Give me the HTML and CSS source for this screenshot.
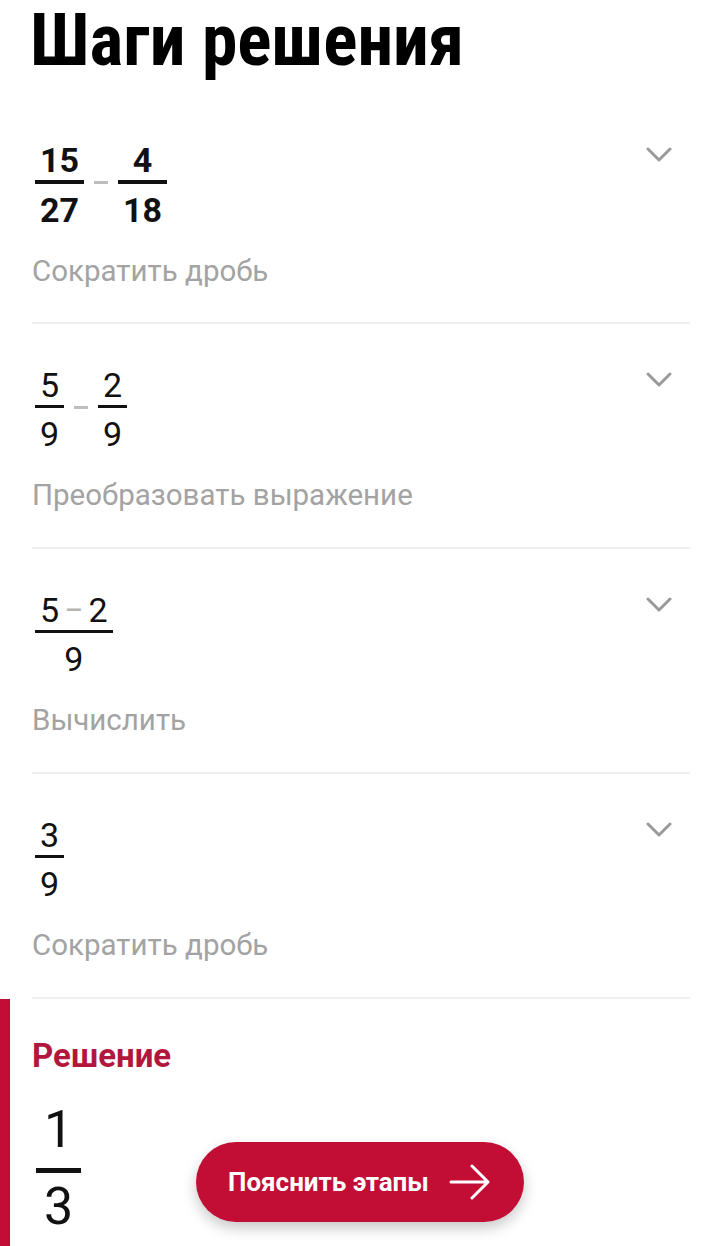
FILE: index.html
```html
<!DOCTYPE html>
<html lang="ru">
<head>
<meta charset="utf-8">
<link rel="stylesheet" href="styles.css">
</head>
<body>
<main class="page">
  <h1 class="title">Шаги решения</h1>

  <section class="step">
    <div class="step-head">
      <div class="expr bold">
        <span class="frac"><span class="num">15</span><span class="bar"></span><span class="den">27</span></span>
        <span class="minus"></span>
        <span class="frac"><span class="num">4</span><span class="bar"></span><span class="den">18</span></span>
      </div>
      <svg class="chev" viewBox="0 0 26 16" width="26" height="16"><path d="M2 2 L13 13 L24 2" fill="none" stroke="#9a9a9a" stroke-width="3" stroke-linecap="round" stroke-linejoin="round"/></svg>
    </div>
    <div class="label">Сократить дробь</div>
  </section>

  <section class="step">
    <div class="step-head">
      <div class="expr">
        <span class="frac"><span class="num">5</span><span class="bar"></span><span class="den">9</span></span>
        <span class="minus"></span>
        <span class="frac"><span class="num">2</span><span class="bar"></span><span class="den">9</span></span>
      </div>
      <svg class="chev" viewBox="0 0 26 16" width="26" height="16"><path d="M2 2 L13 13 L24 2" fill="none" stroke="#9a9a9a" stroke-width="3" stroke-linecap="round" stroke-linejoin="round"/></svg>
    </div>
    <div class="label">Преобразовать выражение</div>
  </section>

  <section class="step">
    <div class="step-head">
      <div class="expr">
        <span class="frac"><span class="num">5<span class="inl-minus">−</span>2</span><span class="bar"></span><span class="den">9</span></span>
      </div>
      <svg class="chev" viewBox="0 0 26 16" width="26" height="16"><path d="M2 2 L13 13 L24 2" fill="none" stroke="#9a9a9a" stroke-width="3" stroke-linecap="round" stroke-linejoin="round"/></svg>
    </div>
    <div class="label">Вычислить</div>
  </section>

  <section class="step">
    <div class="step-head">
      <div class="expr">
        <span class="frac"><span class="num">3</span><span class="bar"></span><span class="den">9</span></span>
      </div>
      <svg class="chev" viewBox="0 0 26 16" width="26" height="16"><path d="M2 2 L13 13 L24 2" fill="none" stroke="#9a9a9a" stroke-width="3" stroke-linecap="round" stroke-linejoin="round"/></svg>
    </div>
    <div class="label">Сократить дробь</div>
  </section>

  <section class="solution">
    <h2 class="sol-title">Решение</h2>
    <span class="frac big"><span class="num">1</span><span class="bar"></span><span class="den">3</span></span>
  </section>

  <button class="explain">
    <span>Пояснить этапы</span>
    <svg viewBox="0 0 42 36" width="42" height="36"><path d="M2 18 H39 M23 2 L39 18 L23 34" fill="none" stroke="#fff" stroke-width="3" stroke-linecap="round" stroke-linejoin="round"/></svg>
  </button>
</main>
</body>
</html>
```

FILE: styles.css
```css
* { box-sizing: border-box; }
html, body {
  margin: 0;
  padding: 0;
  background: #fff;
}
body {
  font-family: Roboto, "Noto Sans", "Liberation Sans", sans-serif;
  color: #111;
  width: 702px;
  height: 1246px;
  overflow: hidden;
}
.page {
  position: relative;
  height: 1246px;
  padding-top: 5px;
}
.title {
  margin: 0 0 23px 30px;
  font-family: "Liberation Sans Narrow", "Roboto Condensed", "Liberation Sans", sans-serif;
  font-weight: 700;
  font-size: 71.5px;
  line-height: 71px;
  color: #000;
}
.step {
  margin: 0 12px 0 32px;
  height: 225px;
  border-bottom: 2px solid #efefef;
  padding-top: 43px;
}
.step-head {
  display: flex;
  justify-content: space-between;
  align-items: flex-start;
}
.chev {
  margin-top: 5px;
  margin-right: 18px;
}
.expr {
  display: flex;
  align-items: flex-start;
  margin-left: 3px;
  font-size: 34px;
  font-weight: 400;
  color: #111;
}
.expr.bold { font-weight: 700; }
.frac {
  display: inline-flex;
  flex-direction: column;
  align-items: stretch;
  text-align: center;
}
.frac .num, .frac .den {
  line-height: 36px;
  padding: 0 5px;
}
.frac .bar {
  height: 3px;
  background: #111;
  margin: 2px 0 8px;
}
.expr.bold .frac .bar {
  height: 4px;
  margin: 2px 0 8px;
}
.minus {
  width: 14px;
  height: 3px;
  background: #bdbdbd;
  margin: 39px 10px 0;
}
.inl-minus {
  color: #b5b5b5;
  margin: 0 5px;
}
.label {
  margin-top: 25px;
  font-size: 29.5px;
  line-height: 36px;
  color: #a3a3a3;
}
.solution {
  height: 248px;
  border-left: 10px solid #c20d35;
  padding: 37px 0 0 22px;
}
.sol-title {
  margin: 0 0 28px;
  font-size: 33px;
  line-height: 40px;
  font-weight: 700;
  color: #b3163d;
}
.frac.big {
  font-size: 52px;
  margin-left: 4px;
}
.frac.big .num, .frac.big .den {
  line-height: 52px;
  padding: 0 8px;
}
.frac.big .bar {
  height: 5px;
  margin: 12px 0 8px;
}
.explain {
  position: absolute;
  left: 196px;
  top: 1142px;
  width: 328px;
  height: 80px;
  border: none;
  border-radius: 40px;
  background: #c20d35;
  color: #fff;
  font-family: Roboto, "Noto Sans", sans-serif;
  font-weight: 700;
  font-size: 26px;
  display: flex;
  align-items: center;
  justify-content: flex-start;
  gap: 20px;
  padding: 0 0 0 32px;
  box-shadow: 0 6px 14px rgba(0,0,0,0.22);
}
```
